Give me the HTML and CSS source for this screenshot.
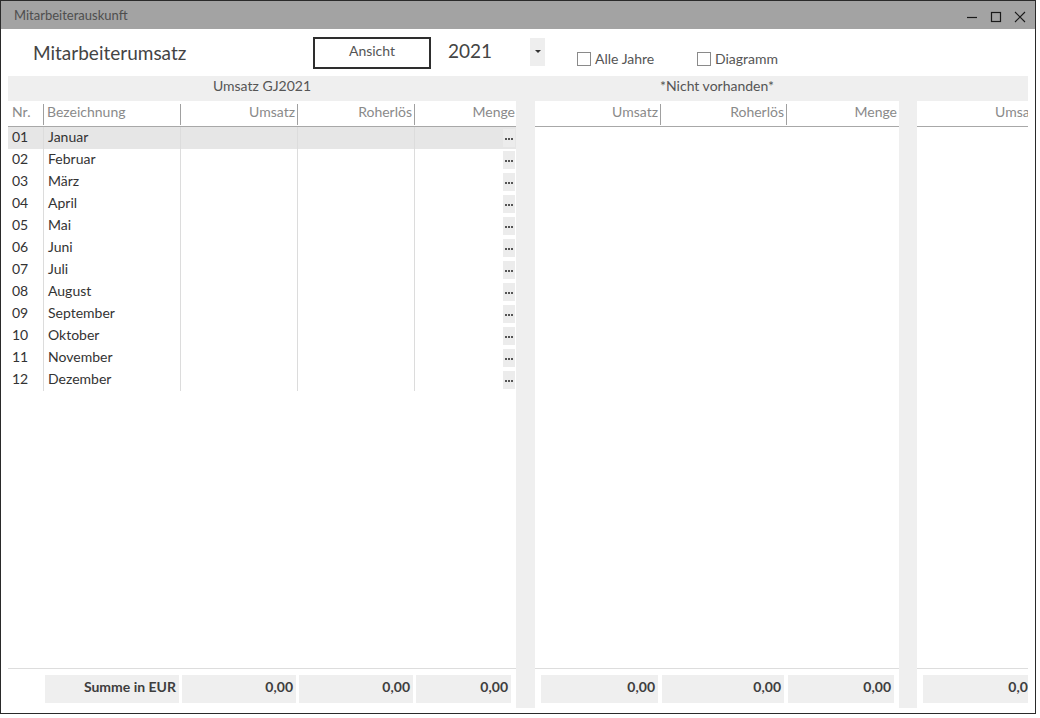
FILE: index.html
```html
<!DOCTYPE html>
<html lang="de">
<head>
<meta charset="utf-8">
<title>Mitarbeiterauskunft</title>
<link rel="stylesheet" href="styles.css">
</head>
<body>
<div class="window">
  <div class="titlebar">
    <span class="title">Mitarbeiterauskunft</span>
    <div class="controls">
      <svg class="ctl" width="12" height="12" viewBox="0 0 12 12"><path d="M1 6.5h10" stroke="#1a1a1a" stroke-width="1.2" fill="none"/></svg>
      <svg class="ctl" width="12" height="12" viewBox="0 0 12 12"><rect x="1.5" y="1.5" width="9" height="9" stroke="#1a1a1a" stroke-width="1.2" fill="none"/></svg>
      <svg class="ctl" width="12" height="12" viewBox="0 0 12 12"><path d="M1 1L11 11M11 1L1 11" stroke="#1a1a1a" stroke-width="1.1" fill="none"/></svg>
    </div>
  </div>
  <div class="content">
    <div class="toolbar">
      <h1 class="heading">Mitarbeiterumsatz</h1>
      <button class="btn">Ansicht</button>
      <span class="year">2021</span>
      <span class="dropdown"><span class="caret"></span></span>
      <label class="check c1"><span class="box"></span>Alle Jahre</label>
      <label class="check c2"><span class="box"></span>Diagramm</label>
    </div>
    <div class="table">
      <div class="section s1">
        <div class="group">Umsatz GJ2021</div>
        <div class="row head">
          <div class="c nr">Nr.</div>
          <div class="c bez sep">Bezeichnung</div>
          <div class="c ums sep num">Umsatz</div>
          <div class="c roh sep num">Roherlös</div>
          <div class="c men sep num">Menge</div>
        </div>
        <div class="body">
          <div class="row sel"><div class="c nr">01</div><div class="c bez ln">Januar</div><div class="c ums ln"></div><div class="c roh ln"></div><div class="c men ln"><span class="more" title="..."></span></div></div>
          <div class="row"><div class="c nr">02</div><div class="c bez ln">Februar</div><div class="c ums ln"></div><div class="c roh ln"></div><div class="c men ln"><span class="more"></span></div></div>
          <div class="row"><div class="c nr">03</div><div class="c bez ln">März</div><div class="c ums ln"></div><div class="c roh ln"></div><div class="c men ln"><span class="more"></span></div></div>
          <div class="row"><div class="c nr">04</div><div class="c bez ln">April</div><div class="c ums ln"></div><div class="c roh ln"></div><div class="c men ln"><span class="more"></span></div></div>
          <div class="row"><div class="c nr">05</div><div class="c bez ln">Mai</div><div class="c ums ln"></div><div class="c roh ln"></div><div class="c men ln"><span class="more"></span></div></div>
          <div class="row"><div class="c nr">06</div><div class="c bez ln">Juni</div><div class="c ums ln"></div><div class="c roh ln"></div><div class="c men ln"><span class="more"></span></div></div>
          <div class="row"><div class="c nr">07</div><div class="c bez ln">Juli</div><div class="c ums ln"></div><div class="c roh ln"></div><div class="c men ln"><span class="more"></span></div></div>
          <div class="row"><div class="c nr">08</div><div class="c bez ln">August</div><div class="c ums ln"></div><div class="c roh ln"></div><div class="c men ln"><span class="more"></span></div></div>
          <div class="row"><div class="c nr">09</div><div class="c bez ln">September</div><div class="c ums ln"></div><div class="c roh ln"></div><div class="c men ln"><span class="more"></span></div></div>
          <div class="row"><div class="c nr">10</div><div class="c bez ln">Oktober</div><div class="c ums ln"></div><div class="c roh ln"></div><div class="c men ln"><span class="more"></span></div></div>
          <div class="row"><div class="c nr">11</div><div class="c bez ln">November</div><div class="c ums ln"></div><div class="c roh ln"></div><div class="c men ln"><span class="more"></span></div></div>
          <div class="row"><div class="c nr">12</div><div class="c bez ln">Dezember</div><div class="c ums ln"></div><div class="c roh ln"></div><div class="c men ln"><span class="more"></span></div></div>
        </div>
        <div class="foot">
          <div class="fc f-nr"></div>
          <div class="fc f-bez cell">Summe in EUR</div>
          <div class="fc f-ums cell">0,00</div>
          <div class="fc f-roh cell">0,00</div>
          <div class="fc f-men cell">0,00</div>
        </div>
      </div>
      <div class="gap g1"></div>
      <div class="section s2">
        <div class="group">*Nicht vorhanden*</div>
        <div class="row head">
          <div class="c ums2 num">Umsatz</div>
          <div class="c roh2 sep num">Roherlös</div>
          <div class="c men2 sep num">Menge</div>
        </div>
        <div class="body"></div>
        <div class="foot">
          <div class="fc f2-ums cell">0,00</div>
          <div class="fc f2-roh cell">0,00</div>
          <div class="fc f2-men cell">0,00</div>
        </div>
      </div>
      <div class="gap g2"></div>
      <div class="section s3">
        <div class="group"></div>
        <div class="row head">
          <div class="c ums3 num">Umsatz</div>
        </div>
        <div class="body"></div>
        <div class="foot">
          <div class="fc f3-ums cell">0,00</div>
        </div>
      </div>
    </div>
  </div>
</div>
</body>
</html>
```

FILE: styles.css
```css
* { box-sizing: border-box; }
html, body { margin: 0; padding: 0; background: #ffffff; }
body { font-family: Lato, "Liberation Sans", sans-serif; color: #333; }

.window {
  width: 1036px;
  height: 714px;
  border: 1px solid #2a2a2a;
  display: flex;
  flex-direction: column;
  background: #fff;
  overflow: hidden;
}

.titlebar {
  height: 28px;
  flex: none;
  background: #a3a3a3;
  display: flex;
  align-items: center;
  padding-left: 13px;
}
.title { font-size: 13px; color: #4e4e4e; }
.controls { margin-left: auto; display: flex; gap: 12px; padding-right: 9px; padding-top: 3px; }
.ctl { display: block; }

.content {
  flex: 1;
  display: flex;
  flex-direction: column;
  padding: 0 6px 5px 7px;
  min-height: 0;
}

.toolbar {
  height: 47px;
  flex: none;
  display: flex;
  align-items: flex-start;
}
.heading {
  margin: 13px 0 0 25px;
  font-size: 19px;
  font-weight: 400;
  color: #444;
  width: 280px;
  line-height: 22px;
}
.btn {
  margin: 8px 0 0 0;
  width: 118px;
  height: 32px;
  border: 2px solid #2e2e2e;
  background: #fff;
  font-family: inherit;
  font-size: 14px;
  color: #555;
  padding: 0 0 5px 0;
  line-height: 20px;
}
.year {
  margin: 10px 0 0 17px;
  font-size: 19px;
  line-height: 24px;
  color: #444;
  width: 82px;
}
.dropdown {
  margin-top: 9px;
  width: 15px;
  height: 28px;
  background: #eeeeee;
  display: flex;
  align-items: center;
  justify-content: center;
}
.caret {
  width: 0; height: 0;
  border-left: 3px solid transparent;
  border-right: 3px solid transparent;
  border-top: 3px solid #333;
  margin-top: -1px;
}
.check {
  margin-top: 22px;
  display: flex;
  align-items: center;
  font-size: 14px;
  color: #555;
  line-height: 16px;
}
.c1 { margin-left: 32px; width: 120px; }
.check .box {
  width: 14px; height: 14px;
  border: 1px solid #8a8a8a;
  background: #fff;
  margin-right: 4px;
}

.table {
  flex: 1;
  display: flex;
  min-height: 0;
}
.section {
  display: flex;
  flex-direction: column;
  overflow: hidden;
}
.s1 { width: 508px; }
.s2 { width: 364px; }
.s3 { width: 111px; }
.gap { background: #efefef; }
.g1 { width: 19px; }
.g2 { width: 18px; }

.group {
  height: 25px;
  flex: none;
  background: #efefef;
  text-align: center;
  font-size: 14px;
  line-height: 19px;
  color: #555;
}
.row { display: flex; height: 22px; flex: none; }
.row.head {
  height: 26px;
  border-bottom: 1px solid #a8a8a8;
}
.row.sel { background: #e6e6e6; }
.c {
  flex: none;
  font-size: 14px;
  line-height: 20px;
  white-space: nowrap;
  position: relative;
  padding: 0 4px;
}
.head .c { line-height: 22px; color: #8a8a8a; }
.num { text-align: right; padding-right: 2px; }
.head .sep::before {
  content: "";
  position: absolute;
  left: 0; top: 3px; bottom: 1px;
  width: 1px;
  background: #a0a0a0;
}
.ln { border-left: 1px solid #dcdcdc; }

.nr { width: 35px; padding-left: 4px; }
.bez { width: 137px; }
.ums { width: 117px; }
.roh { width: 117px; }
.men { width: 102px; display: flex; justify-content: flex-end; align-items: center; padding-right: 1px; }
.head .men { display: block; }
.row .bez.ln { padding-left: 4px; }

.ums2 { width: 125px; }
.roh2 { width: 126px; }
.men2 { width: 113px; }
.ums3 { width: 126px; }

.more {
  width: 12px;
  height: 18px;
  background: #ececec;
  position: relative;
}
.more::before {
  content: "";
  position: absolute;
  left: 5px;
  top: 9px;
  width: 2px;
  height: 2px;
  background: #555;
  box-shadow: -3px 0 0 #555, 3px 0 0 #555;
}

.body { flex: 1; }

.foot {
  height: 40px;
  flex: none;
  border-top: 1px solid #dddddd;
  padding: 6px 0 5px 0;
  display: flex;
  gap: 3px;
}
.fc { height: 28px; flex: none; }
.cell {
  background: #efefef;
  font-weight: 700;
  font-size: 14px;
  line-height: 24px;
  text-align: right;
  padding-right: 3px;
  color: #3e3e3e;
  white-space: nowrap;
}
.f-nr { width: 34px; }
.f-bez { width: 134px; }
.f-ums { width: 114px; }
.f-roh { width: 114px; }
.f-men { width: 95px; }
.s2 .foot { padding-left: 6px; gap: 4px; }
.f2-ums { width: 117px; }
.f2-roh { width: 122px; }
.f2-men { width: 106px; }
.s3 .foot { padding-left: 6px; }
.f3-ums { width: 118px; padding-right: 5px; }
```
